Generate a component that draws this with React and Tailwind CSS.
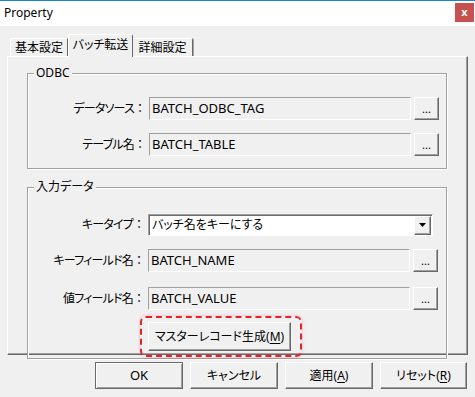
const raised =
  "border border-t-white border-l-white border-r-[#696969] border-b-[#696969] shadow-[inset_-1px_-1px_0_#a0a0a0]";
const sunken =
  "border border-t-[#a0a0a0] border-l-[#a0a0a0] border-r-white border-b-white";

function DotsButton() {
  return (
    <button
      className={`${raised} ml-[3px] w-[25px] h-[23px] bg-[#f0f0f0] flex items-end justify-center pb-[5px] text-[11px] leading-none`}
    >
      ...
    </button>
  );
}

// full-width colon, kept out of the proportional (palt) spacing
function Label({ text, w }) {
  return (
    <div className={`${w} text-right pr-[3px] whitespace-nowrap`}>
      <span className="tracking-[-0.8px]">{text}</span>
      <span className="[font-feature-settings:normal]">：</span>
    </div>
  );
}

function FieldRow({ label, value, labelW = "w-[121px]", className = "" }) {
  return (
    <div className={`flex items-center ${className}`}>
      <Label text={label} w={labelW} />
      <div className={`${sunken} w-[262px] h-[23px] flex items-center pl-[2px] bg-[#f0f0f0] text-[13px]`}>
        {value}
      </div>
      <DotsButton />
    </div>
  );
}

function Group({ title, children, className = "" }) {
  return (
    <fieldset
      className={`ml-[19px] w-[420px] border border-[#a0a0a0] shadow-[inset_1px_1px_0_#fff,1px_1px_0_#fff] ${className}`}
    >
      <legend className="ml-[6px] px-[2px] bg-[#f0f0f0] leading-[16px]">{title}</legend>
      {children}
    </fieldset>
  );
}

function Mn({ text, k }) {
  return (
    <span>
      {text}(<span className="underline underline-offset-2">{k}</span>)
    </span>
  );
}

export default function App() {
  const tabs = ["基本設定", "バッチ転送", "詳細設定"];
  return (
    <div className="w-[475px] h-[397px] bg-[#f0f0f0] flex flex-col text-[12px] text-black font-['Noto_Sans','Noto_Sans_CJK_JP',sans-serif] [font-feature-settings:'palt'] overflow-hidden">
      <div className="border-t border-[#1883d7] h-[26px] bg-white flex items-start justify-between">
        <div className="pl-[4px] pt-[4px] leading-[16px]">Property</div>
        <div className="mt-[2px] mr-[1px] w-[19px] h-[19px] bg-[#c75050] text-white flex items-center justify-center text-[11px] font-bold leading-none pb-[2px]">
          x
        </div>
      </div>

      <div className="flex items-end ml-[10px] mt-[8px] h-[22px]">
        <div className="w-[58px] h-[18px] border-t border-l border-white border-r border-r-[#696969] rounded-tl-[2px] flex items-center justify-center leading-none">
          {tabs[0]}
        </div>
        <div className="relative z-10 -mb-px w-[65px] h-[23px] bg-[#f0f0f0] border-t border-l border-white border-r border-r-[#696969] rounded-t-[2px] flex items-center justify-center leading-none pb-[2px]">
          {tabs[1]}
        </div>
        <div className="w-[60px] h-[18px] border-t border-white border-r border-r-[#696969] shadow-[1px_0_0_#a0a0a0] rounded-tr-[2px] flex items-center justify-center leading-none">
          {tabs[2]}
        </div>
      </div>

      <div className="ml-[7px] w-[461px] h-[299px] border border-t-white border-l-white border-r-[#696969] border-b-[#696969] shadow-[inset_-1px_-1px_0_#a0a0a0] pt-[8px]">
        <Group title="ODBC" className="pt-[16px] pb-[12px]">
          <FieldRow label="データソース" value="BATCH_ODBC_TAG" />
          <FieldRow label="テーブル名" value="BATCH_TABLE" className="mt-[13px]" />
        </Group>

        <Group title="入力データ" className="mt-[10px] pt-[19px] pb-[1px]">
          <div className="flex items-center">
            <Label text="キータイプ" w="w-[120px]" />
            <div className="w-[285px] h-[22px] border border-t-[#a0a0a0] border-l-[#a0a0a0] border-r-white border-b-white shadow-[inset_1px_1px_0_#696969] bg-white flex items-center">
              <div className="flex-1 pl-[3px]">バッチ名をキーにする</div>
              <div className={`${raised} w-[17px] h-[19px] mr-[1px] bg-[#f0f0f0] flex items-center justify-center`}>
                <svg width="7" height="4" viewBox="0 0 7 4">
                  <path d="M0 0h7L3.5 4z" fill="#000" />
                </svg>
              </div>
            </div>
          </div>
          <FieldRow label="キーフィールド名" value="BATCH_NAME" labelW="w-[120px]" className="mt-[13px]" />
          <FieldRow label="値フィールド名" value="BATCH_VALUE" labelW="w-[120px]" className="mt-[15px]" />
          <div className="mt-[6px] ml-[112px] w-[162px] h-[41px] border-2 border-dashed border-[#e8202a] rounded-[6px] pl-[6px] pt-[4px] shadow-[0_0_3px_rgba(232,32,42,0.3)]">
            <button className={`${raised} w-[143px] h-[29px] bg-[#f0f0f0] flex items-center justify-center`}>
              <Mn text="マスターレコード生成" k="M" />
            </button>
          </div>
        </Group>
      </div>

      <div className="flex justify-end gap-[7px] pr-[8px] mt-[7px]">
        <button className="w-[88px] h-[27px] border border-[#696969] shadow-[inset_1px_1px_0_#fff,inset_-1px_-1px_0_#a0a0a0] bg-[#f0f0f0] flex items-center justify-center text-[13px]">
          OK
        </button>
        <button className={`${raised} w-[88px] h-[27px] bg-[#f0f0f0] flex items-center justify-center`}>
          キャンセル
        </button>
        <button className={`${raised} w-[88px] h-[27px] bg-[#f0f0f0] flex items-center justify-center`}>
          <Mn text="適用" k="A" />
        </button>
        <button className={`${raised} w-[87px] h-[27px] bg-[#f0f0f0] flex items-center justify-center`}>
          <Mn text="リセット" k="R" />
        </button>
      </div>
    </div>
  );
}
